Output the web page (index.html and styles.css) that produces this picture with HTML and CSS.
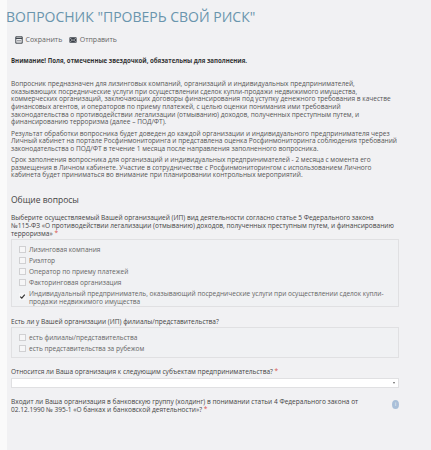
FILE: index.html
```html
<!DOCTYPE html>
<html lang="ru">
<head>
<meta charset="utf-8">
<title>Вопросник</title>
<link rel="stylesheet" href="styles.css">
</head>
<body>
<main class="page">
  <h1 class="title">ВОПРОСНИК "ПРОВЕРЬ СВОЙ РИСК"</h1>
  <div class="toolbar">
    <span class="tool">
      <svg class="icon" viewBox="0 0 10 10"><path d="M1 1h8v8H1z" fill="none" stroke="#3a4048" stroke-width="1.2"/><path d="M1 3h8" stroke="#3a4048" stroke-width="1.4"/><path d="M2.5 6h5" stroke="#3a4048" stroke-width=".8"/></svg>
      Сохранить
    </span>
    <span class="tool">
      <svg class="icon" viewBox="0 0 10 10"><rect x=".5" y="1.5" width="9" height="7" rx=".8" fill="#3a4048"/><path d="M1 2.5l4 3 4-3M1 8l3-3M9 8L6 5" fill="none" stroke="#e8e8ea" stroke-width=".7"/></svg>
      Отправить
    </span>
  </div>
  <p class="warning">Внимание! Поля, отмеченные звездочкой, обязательны для заполнения.</p>
  <section class="intro">
    <p>Вопросник предназначен для лизинговых компаний, организаций и индивидуальных предпринимателей, оказывающих посреднические услуги при осуществлении сделок купли-продажи недвижимого имущества, коммерческих организаций, заключающих договоры финансирования под уступку денежного требования в качестве финансовых агентов, и операторов по приему платежей, с целью оценки понимания ими требований законодательства о противодействии легализации (отмыванию) доходов, полученных преступным путем, и финансированию терроризма (далее – ПОД/ФТ).</p>
    <p>Результат обработки вопросника будет доведен до каждой организации и индивидуального предпринимателя через Личный кабинет на портале Росфинмониторинга и представлена оценка Росфинмониторинга соблюдения требований законодательства о ПОД/ФТ в течение 1 месяца после направления заполненного вопросника.</p>
    <p>Срок заполнения вопросника для организаций и индивидуальных предпринимателей - 2 месяца с момента его размещения в Личном кабинете. Участие в сотрудничестве с Росфинмониторингом с использованием Личного кабинета будет приниматься во внимание при планировании контрольных мероприятий.</p>
  </section>
  <h2 class="section-title">Общие вопросы</h2>
  <div class="field">
    <div class="label">Выберите осуществляемый Вашей организацией (ИП) вид деятельности согласно статье 5 Федерального закона <span class="nowrap">№115-ФЗ</span> «О противодействии легализации (отмыванию) доходов, полученных преступным путем, и финансированию терроризма» <span class="req">*</span></div>
    <div class="box">
      <div class="check"><span class="tick"></span><span>Лизинговая компания</span></div>
      <div class="check"><span class="tick"></span><span>Риэлтор</span></div>
      <div class="check"><span class="tick"></span><span>Оператор по приему платежей</span></div>
      <div class="check"><span class="tick"></span><span>Факторинговая организация</span></div>
      <div class="check wrapped"><span class="tick on"><svg viewBox="0 0 7 7"><path d="M1.2 3.6l1.6 1.6 3-3.6" fill="none" stroke="#333" stroke-width="1.2"/></svg></span><span>Индивидуальный предприниматель, оказывающий посреднические услуги при осуществлении сделок купли-продажи недвижимого имущества</span></div>
    </div>
  </div>
  <div class="field spaced">
    <div class="label">Есть ли у Вашей организации (ИП) филиалы/представительства?</div>
    <div class="box">
      <div class="check"><span class="tick"></span><span>есть филиалы/представительства</span></div>
      <div class="check"><span class="tick"></span><span>есть представительства за рубежом</span></div>
    </div>
  </div>
  <div class="field spaced">
    <div class="label">Относится ли Ваша организация к следующим субъектам предпринимательства? <span class="req">*</span></div>
    <div class="select"><span class="caret"></span></div>
  </div>
  <div class="field spaced help-row">
    <div class="label">Входит ли Ваша организация в банковскую группу (холдинг) в понимании статьи 4 Федерального закона от 02.12.1990 № 395-1 «О банках и банковской деятельности»? <span class="req">*</span></div>
    <span class="info">i</span>
  </div>
</main>
</body>
</html>
```

FILE: styles.css
```css
html, body {
  margin: 0;
  height: 100%;
  overflow: hidden;
  background: #fafafa;
}
.page {
  box-sizing: border-box;
  height: 450px;
  margin-left: 7px;
  padding: 5px 32px 0 4px;
  background: #f1f1f3;
  font-family: "Open Sans", sans-serif;
  font-size: 6.55px;
  line-height: 7.6px;
  color: #555;
}
.title {
  margin: 0 0 0 -5px;
  font-size: 14px;
  line-height: 24px;
  font-weight: 400;
  color: #6a95ad;
  white-space: nowrap;
}
.toolbar {
  display: flex;
  gap: 7px;
  margin: 5px 0 0 4px;
  font-size: 7px;
  line-height: 12px;
  color: #666;
}
.tool {
  display: flex;
  align-items: center;
  gap: 2.5px;
}
.icon {
  width: 8px;
  height: 8px;
}
.warning {
  margin: 11.2px 0 0;
  font-size: 6.1px;
  font-weight: 700;
  color: #333;
}
.intro {
  margin-top: 15.4px;
}
.intro p {
  margin: 0 0 3.8px;
}
.section-title {
  margin: 15px 0 0;
  font-size: 8.5px;
  line-height: 12px;
  font-weight: 400;
  color: #444;
}
.field {
  margin-top: 8.5px;
}
.field.spaced {
  margin-top: 10.5px;
}
.nowrap {
  white-space: nowrap;
}
.label {
  color: #444;
}
.req {
  color: #d9534f;
}
.box {
  margin-top: 2px;
  padding: 5.4px 0 1px 7px;
  border: 1px solid #e0e0e2;
  background: #f0f1f3;
  color: #666;
}
.check {
  display: flex;
  align-items: flex-start;
  gap: 3px;
  margin-bottom: 3.5px;
}
.check.wrapped {
  margin-bottom: 0;
}
.tick {
  flex: none;
  box-sizing: border-box;
  width: 7px;
  height: 7px;
  border: 1px solid #d0d0d2;
  background: #f6f6f7;
}
.tick.on {
  margin-top: 3px;
  border: 0;
}
.tick svg {
  display: block;
}
.select {
  display: flex;
  justify-content: flex-end;
  align-items: center;
  height: 8px;
  margin-top: 2px;
  padding-right: 3px;
  border: 1px solid #e0e0e2;
  background: #fff;
}
.caret {
  border: 1.5px solid transparent;
  border-top: 2px solid #666;
  border-bottom: 0;
}
.help-row {
  display: flex;
  justify-content: space-between;
  align-items: flex-start;
  gap: 30px;
}
.info {
  flex: none;
  width: 7px;
  height: 9px;
  margin: 1.5px 0 0;
  border-radius: 50%;
  background: #a9bfd8;
  color: #f1f1f3;
  font-size: 6px;
  line-height: 9px;
  text-align: center;
}
```
